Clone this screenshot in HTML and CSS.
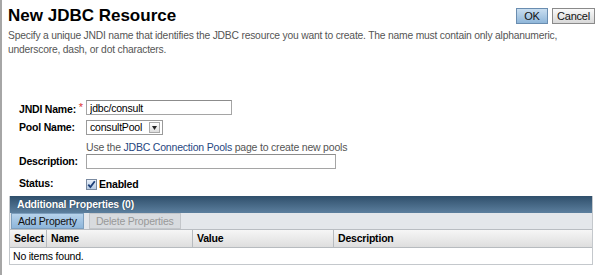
FILE: index.html
```html
<!DOCTYPE html>
<html>
<head>
<meta charset="utf-8">
<link rel="stylesheet" href="styles.css">
</head>
<body>
<div class="page">
  <div class="top">
    <div class="title-row">
      <h1 class="title">New JDBC Resource</h1>
      <div class="actions">
        <button class="btn btn-primary">OK</button>
        <button class="btn btn-cancel">Cancel</button>
      </div>
    </div>
    <p class="intro">Specify a unique JNDI name that identifies the JDBC resource you want to create. The name must contain only alphanumeric, underscore, dash, or dot characters.</p>
  </div>
  <div class="form">
    <div class="row r-jndi">
      <label class="lbl">JNDI Name: <span class="req">*</span></label>
      <div class="field"><input class="txt txt-short" type="text" value="jdbc/consult"></div>
    </div>
    <div class="row r-pool">
      <label class="lbl">Pool Name:</label>
      <div class="field">
        <div class="select"><span class="sel-text">consultPool</span><span class="sel-arrow"><svg width="5" height="4" viewBox="0 0 5 4"><path d="M0 0h5L2.5 4z" fill="#222"/></svg></span></div>
        <div class="help">Use the <a class="link">JDBC Connection Pools</a> page to create new pools</div>
      </div>
    </div>
    <div class="row r-desc">
      <label class="lbl">Description:</label>
      <div class="field"><input class="txt txt-long" type="text" value=""></div>
    </div>
    <div class="row r-status">
      <label class="lbl">Status:</label>
      <div class="field"><span class="cb"><svg width="9" height="9" viewBox="0 0 9 9"><path d="M1.3 4.6l2.1 2.5L7.8 1.2" fill="none" stroke="#1d3f78" stroke-width="1.8"/></svg></span><span class="cb-label">Enabled</span></div>
    </div>
  </div>
  <div class="table">
    <div class="t-title">Additional Properties (0)</div>
    <div class="t-tools">
      <button class="tbtn tbtn-on">Add Property</button>
      <button class="tbtn tbtn-off">Delete Properties</button>
    </div>
    <div class="t-head">
      <div class="c c-sel">Select</div>
      <div class="c c-name">Name</div>
      <div class="c c-val">Value</div>
      <div class="c c-desc">Description</div>
    </div>
    <div class="t-empty">No items found.</div>
  </div>
</div>
</body>
</html>
```
FILE: styles.css
```css
html, body {
  margin: 0;
  padding: 0;
  background: #fff;
}
body {
  font-family: "Liberation Sans", Arial, sans-serif;
  font-size: 10px;
  letter-spacing: -0.2px;
  color: #000;
  width: 600px;
  height: 275px;
  overflow: hidden;
}
.page {
  border-left: 2px solid #a6a6a6;
  height: 275px;
  box-sizing: border-box;
  padding: 0 7px 0 6px;
}
.top {
  padding-top: 5px;
}
.title-row {
  display: flex;
  justify-content: space-between;
  align-items: flex-start;
}
.title {
  margin: 0;
  font-size: 17px;
  letter-spacing: 0;
  font-weight: bold;
  line-height: 21px;
  color: #000;
}
.actions {
  display: flex;
  gap: 4px;
  padding-top: 3px;
  margin-right: -2px;
}
.btn {
  font-family: "Liberation Sans", Arial, sans-serif;
  font-size: 11px;
  letter-spacing: -0.2px;
  height: 16px;
  padding: 0;
  border: 1px solid #8a8a8a;
  background: linear-gradient(#fafafa, #d8d8d8);
  color: #111;
  line-height: 14px;
}
.btn-primary {
  width: 32px;
  background: linear-gradient(#c9def0, #8fb6d9);
  border-color: #6a8db0;
}
.btn-cancel {
  width: 43px;
}
.intro {
  margin: 3px 0 0 0;
  font-size: 10.3px;
  line-height: 14px;
  color: #555;
  padding-right: 0;
}
.form {
  padding: 43px 0 0 11px;
  display: flex;
  flex-direction: column;
}
.row {
  display: flex;
  align-items: flex-start;
}
.lbl {
  width: 67px;
  flex: none;
  white-space: nowrap;
  font-weight: bold;
  font-size: 10.5px;
  line-height: 15px;
}
.req {
  color: #d33;
  font-weight: normal;
  font-size: 11px;
  vertical-align: 2px;
}
.r-jndi { height: 20px; }
.r-pool { height: 34px; }
.r-desc { height: 22px; }
.r-status { height: 20px; }
.txt {
  height: 15px;
  box-sizing: border-box;
  border: 1px solid #a5a5a5;
  border-top-color: #8c8c8c;
  font-family: "Liberation Sans", Arial, sans-serif;
  font-size: 10.5px;
  letter-spacing: -0.2px;
  padding: 0 3px;
  margin: 0;
  color: #000;
  outline: none;
}
.txt-short { width: 146px; }
.txt-long { width: 250px; }
.select {
  width: 77px;
  height: 15px;
  box-sizing: border-box;
  border: 1px solid #9a9a9a;
  display: flex;
  align-items: center;
  justify-content: space-between;
  background: #fff;
}
.sel-text {
  padding-left: 3px;
  font-size: 10.5px;
  line-height: 13px;
}
.sel-arrow {
  width: 9px;
  height: 9px;
  margin-right: 2px;
  border: 1px solid #aaa;
  background: linear-gradient(#fff, #ddd);
  display: flex;
  align-items: center;
  justify-content: center;
}
.help {
  margin-top: 5px;
  color: #555;
  font-size: 10.5px;
  line-height: 14px;
}
.link {
  color: #27477f;
}
.field {
  display: flex;
  flex-direction: column;
}
.r-status .field {
  flex-direction: row;
  align-items: center;
  padding-top: 1px;
}
.cb {
  width: 9px;
  height: 9px;
  border: 1px solid #7a8aa0;
  background: linear-gradient(#e8f0fa, #b7cbe3);
  display: flex;
  margin-right: 2px;
}
.cb-label {
  font-weight: bold;
  font-size: 10.5px;
  line-height: 14px;
}
.table {
  margin-left: 1px;
  border: 1px solid #c4c8cc;
  border-top: none;
}
.t-title {
  height: 17px;
  background: linear-gradient(#2f4f6b, #5c7f9e);
  color: #fff;
  font-weight: bold;
  font-size: 10.5px;
  line-height: 17px;
  padding-left: 7px;
  text-shadow: 0 0 1px #1a2d40;
}
.t-tools {
  height: 16px;
  background: #e4e7eb;
  display: flex;
  align-items: center;
  gap: 5px;
  padding-left: 1px;
  border-bottom: 1px solid #b9bdc2;
}
.tbtn {
  font-family: "Liberation Sans", Arial, sans-serif;
  font-size: 10.5px;
  letter-spacing: -0.2px;
  height: 16px;
  padding: 0 6px;
  line-height: 14px;
  border: 1px solid #c3c6ca;
  background: #d8dbdf;
  color: #999;
}
.tbtn-on {
  background: linear-gradient(#b7d3ec, #8db5da);
  border-color: #7d9fbe;
  color: #111;
}
.t-head {
  display: flex;
  height: 17px;
  background: linear-gradient(#f6f6f6, #dedede);
  border-bottom: 1px solid #b7bbbf;
}
.c {
  font-weight: bold;
  font-size: 10.5px;
  line-height: 17px;
  padding-left: 4px;
  border-right: 1px solid #b7bbbf;
  box-sizing: border-box;
}
.c-sel { width: 37px; }
.c-name { width: 146px; }
.c-val { width: 141px; }
.c-desc { flex: 1; border-right: none; }
.t-empty {
  height: 16px;
  font-size: 10.5px;
  line-height: 16px;
  padding-left: 3px;
}
```
